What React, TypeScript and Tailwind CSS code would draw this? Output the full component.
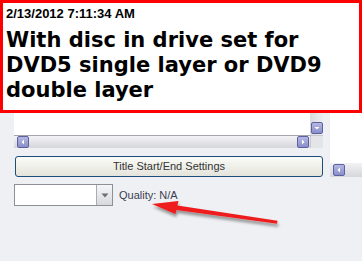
import React from "react";

function ScrollButton({ dir }: { dir: "left" | "right" | "down" }) {
  return (
    <div className="w-[12px] h-[12px] rounded-[2px] border border-[#5c60a0] bg-gradient-to-b from-[#b4b8e2] to-[#8a8fca] flex items-center justify-center">
      <svg width="6" height="6" viewBox="0 0 6 6">
        {dir === "left" && <polygon points="4,0.5 4,5.5 1.5,3" fill="#fff" />}
        {dir === "right" && <polygon points="2,0.5 2,5.5 4.5,3" fill="#fff" />}
        {dir === "down" && <polygon points="0.5,2 5.5,2 3,4.5" fill="#fff" />}
      </svg>
    </div>
  );
}

export default function App() {
  return (
    <div className="relative w-[362px] h-[261px] overflow-hidden bg-[#eef0f3] font-['Liberation_Sans',Arial,sans-serif]">
      {/* Callout box */}
      <div className="h-[113px] border-[3px] border-[#ff0000] bg-white pl-[3px] pt-[3px]">
        <div className="text-[13px] leading-[15px] font-bold text-black">2/13/2012 7:11:34 AM</div>
        <div className="mt-[7px] w-[330px] font-['DejaVu_Sans',Verdana,sans-serif] font-bold text-[21px] leading-[25px] text-black">
          With disc in drive set for DVD5 single layer or DVD9 double layer
        </div>
      </div>

      <div className="flex items-start">
        {/* Left column */}
        <div className="w-[323px] pl-[14px]">
          {/* list box remains */}
          <div className="flex h-[22px]">
            <div className="flex-1 bg-white" />
            <div className="w-[13px] bg-gradient-to-r from-[#d9dadf] to-[#eceef0] flex flex-col justify-end items-center pb-[1px]">
              <ScrollButton dir="down" />
            </div>
          </div>
          <div className="flex h-[13px]">
            <div className="flex-1 border-t border-[#a3a6ad] bg-gradient-to-b from-[#f4f4f6] to-[#d5d6da] flex items-center justify-between pl-[3px] pr-[1px]">
              <ScrollButton dir="left" />
              <ScrollButton dir="right" />
            </div>
            <div className="w-[13px] bg-[#e4e5e8] border-l border-t border-[#c9cacd]" />
          </div>

          <button className="mt-[8px] ml-[1px] w-[308px] h-[21px] rounded-[3px] border border-[#1d4c7d] bg-gradient-to-b from-[#fbfbf8] to-[#e4e4dc] text-[11px] text-[#333] flex items-center justify-center">
            Title Start/End Settings
          </button>

          <div className="mt-[7px] flex items-center">
            <div className="w-[99px] h-[22px] border border-[#8d9197] bg-white flex justify-end">
              <div className="w-[16px] h-full border-l border-[#a9acb1] bg-gradient-to-b from-[#f6f6f7] to-[#d8d9dc] flex items-center justify-center">
                <svg width="8" height="5" viewBox="0 0 8 5">
                  <polygon points="0.5,0.5 7.5,0.5 4,4.5" fill="#6b6e73" />
                </svg>
              </div>
            </div>
            <span className="ml-[6px] text-[11px] text-[#3b3d52]">Quality: N/A</span>
          </div>
        </div>

        {/* Right column */}
        <div className="flex-1 pl-[7px]">
          <div className="h-[50px] bg-white" />
          <div className="h-[14px] bg-gradient-to-b from-[#f2f2f4] to-[#d6d7db] flex items-center pl-[3px]">
            <ScrollButton dir="left" />
          </div>
        </div>
      </div>

      {/* Red arrow annotation */}
      <svg className="absolute left-0 top-0 pointer-events-none" width="362" height="261" viewBox="0 0 362 261">
        <defs>
          <filter id="sh" x="-20%" y="-50%" width="140%" height="200%">
            <feDropShadow dx="1" dy="3" stdDeviation="1.8" floodColor="#000" floodOpacity="0.4" />
          </filter>
        </defs>
        <g filter="url(#sh)">
          <polygon
            points="152,204 178.5,201 177.4,205.4 277.5,220.8 277,223.8 176.4,210 175.4,214"
            fill="#ee1c1c"
          />
        </g>
      </svg>
    </div>
  );
}
